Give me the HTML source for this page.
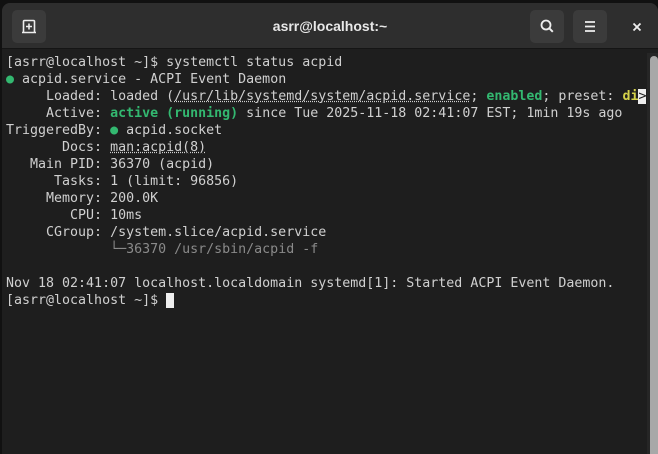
<!DOCTYPE html>
<html><head><style>
*{margin:0;padding:0;box-sizing:border-box}
body{width:658px;height:454px;background:#111;overflow:hidden;font-family:"Liberation Sans",sans-serif;position:relative}
.win{position:absolute;left:2px;top:3px;width:656px;height:451px;background:#1e1e1e;border-radius:8px 8px 0 0;overflow:hidden}
.hdr{position:absolute;left:0;top:0;width:656px;height:46px;background:#2e2e2e;border-bottom:1px solid #151515}
.btn{position:absolute;top:7px;width:34px;height:33px;background:#3b3b3b;border-radius:5px}
.title{position:absolute;left:0;width:656px;top:15px;text-align:center;color:#e8e8e8;font-weight:bold;font-size:14px}
.term{position:absolute;left:4px;top:51px;font-family:"DejaVu Sans Mono",monospace;font-size:13.3px;line-height:17px;color:#d0d0d0;white-space:pre}
.g{color:#33b870;font-weight:bold}
.d{color:#33b870}
.y{color:#d4d24a;font-weight:bold}
.u{text-decoration:underline dotted}
.m{color:#8a8a8a}
.sb{position:absolute;left:645px;top:50px;width:11px;height:401px;background:#262626}
.th{position:absolute;left:648px;top:53px;width:8px;height:398px;background:#a8a8a8;border-radius:4px 4px 0 0}
</style></head><body>
<div class="win">
<div class="hdr">
<div class="btn" style="left:10px"><svg width="34" height="33" viewBox="0 0 34 33"><path d="M11.5 22V11.5a1 1 0 0 1 1-1h9a1 1 0 0 1 1 1V22" fill="none" stroke="#eee" stroke-width="1.6"/><path d="M10 22.5h14" stroke="#eee" stroke-width="1.6"/><path d="M17 13.5v6M14 16.5h6" stroke="#eee" stroke-width="1.6"/></svg></div>
<div class="title">asrr@localhost:~</div>
<div class="btn" style="left:528px"><svg width="34" height="33" viewBox="0 0 34 33"><circle cx="16" cy="15" r="4.5" fill="none" stroke="#eee" stroke-width="1.8"/><path d="M19.3 18.3l3.5 3.5" stroke="#eee" stroke-width="2"/></svg></div>
<div class="btn" style="left:571px"><svg width="34" height="33" viewBox="0 0 34 33"><path d="M12 12h10M12 16.5h10M12 21h10" stroke="#eee" stroke-width="1.8"/></svg></div>
<svg style="position:absolute;left:629px;top:18px" width="12" height="12" viewBox="0 0 12 12"><path d="M2.5 2.5l7 7M9.5 2.5l-7 7" stroke="#eee" stroke-width="1.8"/></svg>
</div>
<div class="term">[asrr@localhost ~]$ systemctl status acpid
<span class="d">●</span> acpid.service - ACPI Event Daemon
     Loaded: loaded (<span class="u">/usr/lib/systemd/system/acpid.service</span>; <span class="g">enabled</span>; preset: <span class="y">di</span><span style="background:#eee;color:#1e1e1e">&gt;</span>
     Active: <span class="g">active (running)</span> since Tue 2025-11-18 02:41:07 EST; 1min 19s ago
TriggeredBy: <span class="d">●</span> acpid.socket
       Docs: <span class="u">man:acpid(8)</span>
   Main PID: 36370 (acpid)
      Tasks: 1 (limit: 96856)
     Memory: 200.0K
        CPU: 10ms
     CGroup: /system.slice/acpid.service
             <span class="m">└─36370 /usr/sbin/acpid -f</span>

Nov 18 02:41:07 localhost.localdomain systemd[1]: Started ACPI Event Daemon.
[asrr@localhost ~]$ <span style="background:#eee"> </span></div>
<div class="sb"></div><div class="th"></div>
</div>
</body></html>
